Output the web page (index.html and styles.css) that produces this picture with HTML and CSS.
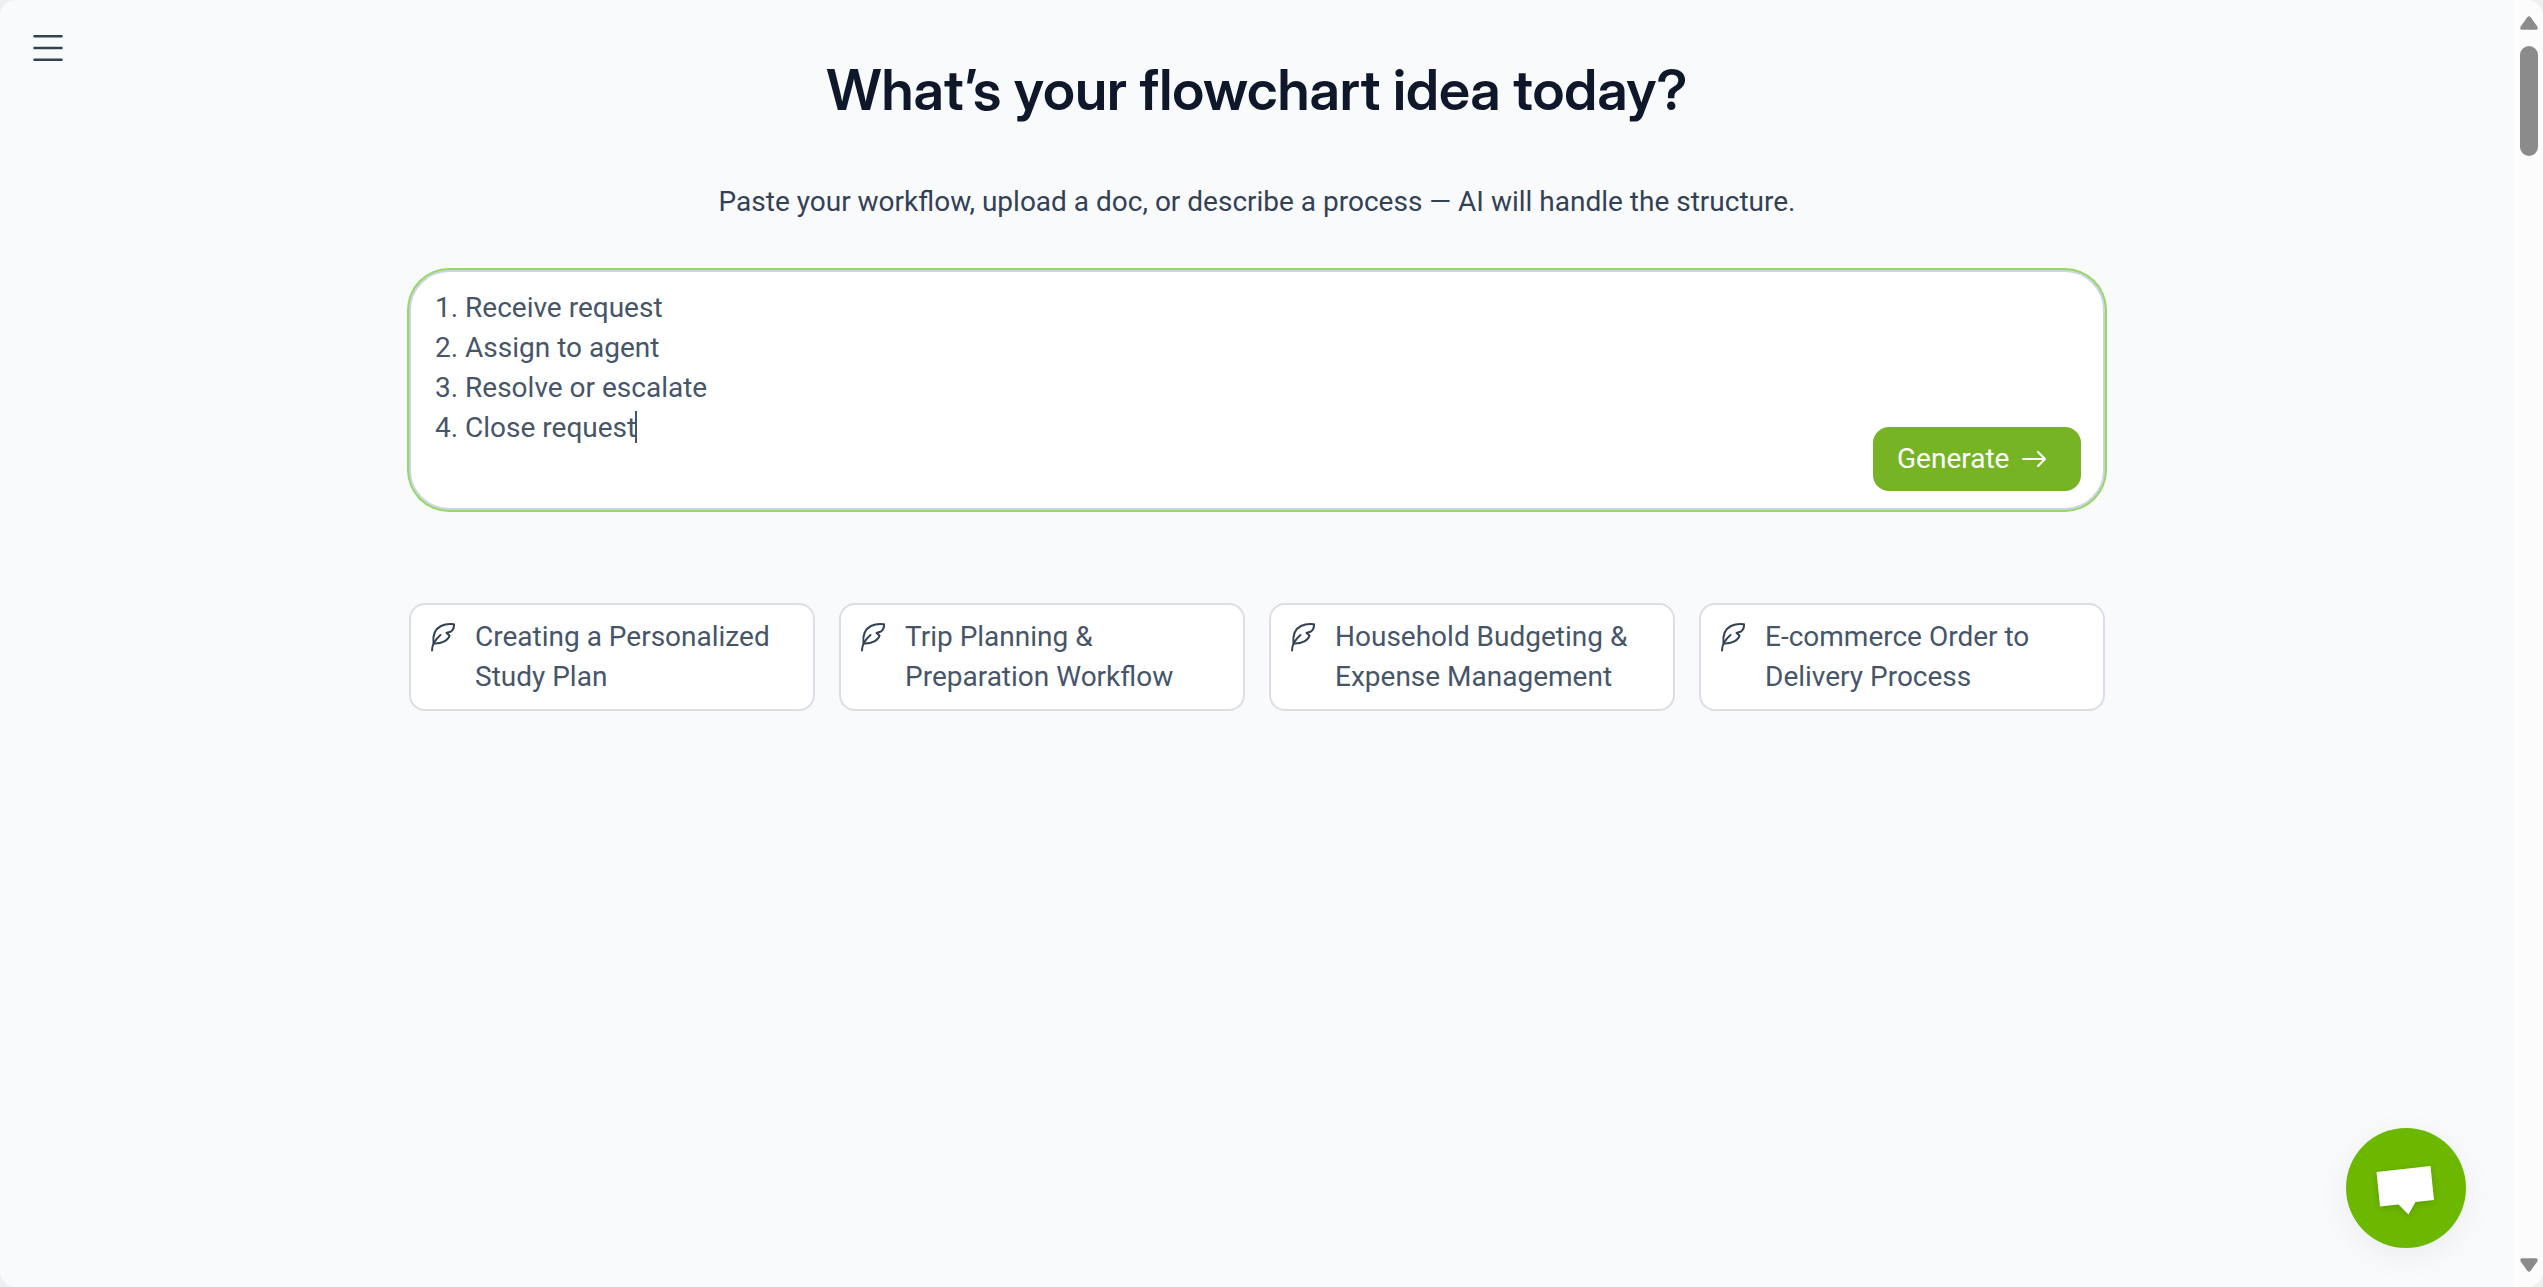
FILE: index.html
```html
<!DOCTYPE html>
<html lang="en">
<head>
<meta charset="utf-8">
<title>Flowchart generator</title>
<link rel="stylesheet" href="styles.css">
</head>
<body>
<div class="window">
  <div class="page">
    <button class="menu-button" type="button" aria-label="Open menu">
      <svg viewBox="0 0 32 28" fill="none" stroke="currentColor" stroke-width="2.5" stroke-linecap="round"><path d="M2.5 2.2h27M2.5 14h27M2.5 25.8h27"/></svg>
    </button>
    <main class="content">
      <h1 class="title">What’s your flowchart idea today?</h1>
      <p class="subtitle">Paste your workflow, upload a doc, or describe a process — AI will handle the structure.</p>
      <form class="prompt">
        <textarea class="prompt-input" aria-label="Describe your flowchart">1. Receive request
2. Assign to agent
3. Resolve or escalate
4. Close request</textarea>
        <span class="caret"></span>
        <button class="generate" type="button">Generate
          <svg viewBox="0 0 26 20" fill="none" stroke="currentColor" stroke-width="2" stroke-linecap="round" stroke-linejoin="round"><path d="M2 10h22M17 3l7 7-7 7"/></svg>
        </button>
      </form>
      <div class="ideas">
        <button class="idea" type="button"><svg class="feather" viewBox="0 0 28 40"><use href="#feather"/></svg><span>Creating a Personalized Study Plan</span></button>
        <button class="idea" type="button"><svg class="feather" viewBox="0 0 28 40"><use href="#feather"/></svg><span>Trip Planning &amp; Preparation Workflow</span></button>
        <button class="idea" type="button"><svg class="feather" viewBox="0 0 28 40"><use href="#feather"/></svg><span>Household Budgeting &amp; Expense Management</span></button>
        <button class="idea" type="button"><svg class="feather" viewBox="0 0 28 40"><use href="#feather"/></svg><span>E-commerce Order to Delivery Process</span></button>
      </div>
    </main>
    <button class="chat" type="button" aria-label="Open chat">
      <svg viewBox="0 0 120 120" fill="#fff"><path d="M30.5 44 84.5 38 88 72 69.500 74 62.500 86.500 52.500 76.500 34 78.500z"/></svg>
    </button>
  </div>
  <div class="scrollbar">
    <svg class="arrow" viewBox="0 0 18 14"><path d="M7.300 1.200Q9 -.8 10.700 1.200L17.300 10.500Q18.500 13.500 16 13.800H2Q-.5 13.500 .7 10.500z"/></svg>
    <div class="thumb"></div>
    <svg class="arrow arrow-down" viewBox="0 0 18 14"><path d="M7.300 12.800Q9 14.800 10.700 12.800L17.300 3.500Q18.500 .5 16 .2H2Q-.5 .5 .7 3.500z"/></svg>
  </div>
</div>
<svg class="symbols" aria-hidden="true">
  <symbol id="feather" viewBox="0 0 28 40">
    <g fill="none" stroke="currentColor" stroke-width="2" stroke-linecap="round" stroke-linejoin="round"><path d="M3 33.500C3 29 5 23.500 11.500 18"/><path d="M4.500 26.500C3.500 18 6 12 12 9 16 7 20.500 6.500 25 7.200 25.200 10.500 24 13 22 14.500L17.500 16 20.500 18.500C19.500 23 13 27 4.500 26.500z"/></g>
  </symbol>
</svg>
</body>
</html>
```

FILE: styles.css
```css
* { box-sizing: border-box; }

body {
  margin: 0;
  background: #eeeff0;
  color: #475569;
  font: 28px/40px Roboto, "Liberation Sans", sans-serif;
}

button, textarea { font: inherit; color: inherit; }

svg { display: block; }

.symbols { display: none; }

.window {
  display: flex;
  min-height: 100vh;
  border-radius: 16px;
  overflow: hidden;
  background: #f9fafc;
}

.page {
  position: relative;
  flex: 1;
  padding: 48px 24px;
}

.menu-button {
  position: absolute;
  top: 34px;
  left: 32px;
  width: 32px;
  padding: 0;
  border: 0;
  background: none;
  color: #334155;
}

.content {
  max-width: 1696px;
  margin: 0 auto;
}

.title {
  margin: 0;
  color: #0f172a;
  font: 600 56px/84px "Inter Display", Inter, "Liberation Sans", sans-serif;
  text-align: center;
}

.subtitle {
  margin: 50px 0 48px;
  color: #334155;
  text-align: center;
}

.prompt {
  position: relative;
  display: flex;
}

.prompt-input {
  width: 100%;
  height: 240px;
  padding: 16px 24px;
  border: 2px solid #cbd5e1;
  border-radius: 40px;
  outline: 0;
  background: #fff;
  box-shadow: 0 0 0 2px #97d765;
  resize: none;
}

.caret {
  position: absolute;
  top: 141px;
  left: 226px;
  width: 2px;
  height: 32px;
  background: #475569;
}

.generate {
  position: absolute;
  right: 24px;
  bottom: 19px;
  display: flex;
  align-items: center;
  gap: 12px;
  width: 208px;
  height: 64px;
  padding: 0 24px;
  border: 0;
  border-radius: 16px;
  background: #76b426;
  color: #fff;
}

.generate svg { width: 26px; }

.ideas {
  display: grid;
  grid-template-columns: repeat(4, 1fr);
  gap: 24px;
  margin-top: 93px;
}

.idea {
  display: flex;
  gap: 18px;
  padding: 12px 18px;
  border: 2px solid #dcdde7;
  border-radius: 16px;
  background: #fff;
  text-align: left;
}

.feather {
  flex: none;
  width: 28px;
  height: 40px;
  color: #334155;
}

.chat {
  position: absolute;
  right: 48px;
  bottom: 39px;
  width: 120px;
  height: 120px;
  padding: 0;
  border: 0;
  border-radius: 50%;
  background: #6cb700;
  box-shadow: 0 8px 32px rgba(0, 0, 0, 0.06);
}

.chat path { filter: drop-shadow(0 2px 3px rgba(0, 0, 0, 0.15)); }

.scrollbar {
  display: flex;
  flex-direction: column;
  align-items: center;
  width: 29px;
  padding: 16px 0 15px;
  background: #fcfcfc;
  fill: #8b8b8b;
}

.arrow { width: 18px; height: 14px; }

.arrow-down { margin-top: auto; }

.thumb {
  width: 18px;
  height: 110px;
  margin-top: 16px;
  border-radius: 9px;
  background: #8b8b8b;
}
```
